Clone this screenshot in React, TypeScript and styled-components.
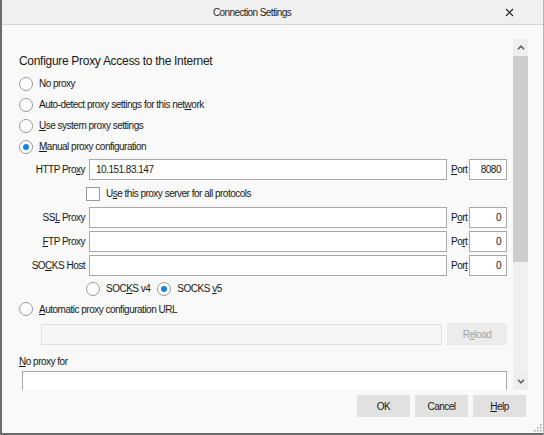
import React from "react";
import styled, { createGlobalStyle } from "styled-components";

const FONT = `"Liberation Sans", Arial, sans-serif`;

const Global = createGlobalStyle`
  html, body { margin: 0; padding: 0; background: #f9f9f9; }
  * { box-sizing: border-box; }
`;

const Window = styled.div`
  position: relative;
  width: 544px;
  height: 435px;
  display: flex;
  flex-direction: column;
  background: #f9f9f9;
  border-left: 2px solid #6c6c6c;
  border-bottom: 2px solid #6c6c6c;
  border-right: 1px solid #b5b5b5;
  overflow: hidden;
  font-family: ${FONT};
  font-size: 10px;
  letter-spacing: -0.5px;
  color: #181818;
`;

const TitleBar = styled.div`
  height: 25px;
  flex: none;
  display: flex;
  align-items: center;
  background: #f0f0f0;
  border-bottom: 1px solid #d6d6d6;
  padding-right: 27px;
`;

const Title = styled.div`
  flex: 1;
  text-align: center;
  font-size: 10px;
  letter-spacing: -0.6px;
  color: #1e1e1e;
`;

const CloseBtn = styled.div`
  width: 14px;
  height: 14px;
  display: flex;
  align-items: center;
  justify-content: center;
`;

const ScrollArea = styled.div`
  margin-top: 14px;
  height: 351px;
  flex: none;
  display: flex;
  padding-right: 15px;
`;

const Content = styled.div`
  flex: 1;
  overflow: hidden;
  padding: 11px 0 0 17px;
  display: flex;
  flex-direction: column;
  & > * {
    flex-shrink: 0;
  }
`;

const Heading = styled.div`
  height: 23px;
  line-height: 23px;
  font-size: 12px;
  letter-spacing: -0.3px;
  color: #181818;
`;

const RadioRow = styled.label<{ $h?: number }>`
  height: ${(p) => p.$h ?? 21}px;
  display: flex;
  align-items: center;
  gap: 6px;
  white-space: nowrap;
`;

const RadioCircle = styled.span<{ $checked?: boolean }>`
  width: 14px;
  height: 14px;
  flex: none;
  border-radius: 50%;
  border: 1px solid #9a9a9a;
  background: #fff;
  display: flex;
  align-items: center;
  justify-content: center;
  &::after {
    content: "";
    display: ${(p) => (p.$checked ? "block" : "none")};
    width: 6px;
    height: 6px;
    border-radius: 50%;
    background: #1683d8;
  }
`;

const Box = styled.span`
  width: 14px;
  height: 14px;
  flex: none;
  border: 1px solid #9a9a9a;
  background: #fff;
`;

const U = styled.span`
  text-decoration: underline;
  text-underline-offset: 1px;
`;

const ProxyGrid = styled.div`
  margin: 2px 0 0 20px;
  display: grid;
  grid-template-columns: 47px 358px 16px 38px;
  grid-auto-rows: 21px;
  column-gap: 3px;
  row-gap: 3px;
  align-items: center;
`;

const FieldLabel = styled.span`
  justify-self: end;
  white-space: nowrap;
  padding-right: 1px;
`;

const PortLabel = styled.span`
  white-space: nowrap;
  padding-left: 1px;
`;

const Field = styled.div<{ $align?: "left" | "right" }>`
  height: 21px;
  background: #fff;
  border: 1px solid #a9a9a9;
  display: flex;
  align-items: center;
  justify-content: ${(p) => (p.$align === "right" ? "flex-end" : "flex-start")};
  padding: 0 5px 0 6px;
  color: #181818;
`;

const CheckRow = styled.div`
  grid-column: 1 / -1;
  display: flex;
  align-items: center;
  gap: 6px;
  padding-left: 47px;
`;

const SocksRow = styled.div`
  margin-top: 2px;
  height: 21px;
  display: flex;
  align-items: center;
  padding-left: 67px;
  gap: 7px;
`;

const UrlRow = styled.div`
  margin-top: 4px;
  height: 22px;
  display: flex;
  align-items: flex-end;
  gap: 5px;
  padding-left: 22px;
`;

const UrlField = styled.div`
  width: 401px;
  height: 21px;
  border: 1px solid #dedede;
  background: #f7f7f7;
`;

const DisabledButton = styled.div`
  width: 60px;
  height: 22px;
  background: #ececec;
  color: #a3a3a3;
  display: flex;
  align-items: center;
  justify-content: center;
`;

const NoProxyLabel = styled.div`
  margin-top: 10px;
  height: 13px;
  line-height: 13px;
`;

const TextArea = styled.div`
  margin: 3px 0 0 3px;
  width: 485px;
  height: 60px;
  background: #fff;
  border: 1px solid #a9a9a9;
`;

const Scrollbar = styled.div`
  width: 15px;
  flex: none;
  display: flex;
  flex-direction: column;
  background: #f0f0f0;
`;

const ScrollBtn = styled.div`
  height: 17px;
  flex: none;
  display: flex;
  align-items: center;
  justify-content: center;
  background: #eeeeee;
`;

const Thumb = styled.div`
  height: 206px;
  flex: none;
  background: #cdcdcd;
`;

const Track = styled.div`
  flex: 1;
`;

const Footer = styled.div`
  flex: 1;
  display: flex;
  justify-content: flex-end;
  align-items: flex-start;
  gap: 5px;
  padding: 5px 17px 0 0;
`;

const Button = styled.div`
  width: 53px;
  height: 22px;
  background: #e1e1e1;
  display: flex;
  align-items: center;
  justify-content: center;
  color: #181818;
`;

const Grip = styled.svg`
  position: absolute;
  right: 1px;
  bottom: 1px;
`;

const Chevron = ({ up }: { up?: boolean }) => (
  <svg width="8" height="5" viewBox="0 0 8 5">
    <path
      d={up ? "M1 4.2 L4 1.2 L7 4.2" : "M1 0.8 L4 3.8 L7 0.8"}
      fill="none"
      stroke="#606060"
      strokeWidth="1.6"
    />
  </svg>
);

const Radio = ({
  checked,
  children,
  h,
}: {
  checked?: boolean;
  children: React.ReactNode;
  h?: number;
}) => (
  <RadioRow $h={h}>
    <RadioCircle $checked={checked} />
    <span>{children}</span>
  </RadioRow>
);

export default function App() {
  return (
    <>
      <Global />
      <Window>
        <TitleBar>
          <Title>Connection Settings</Title>
          <CloseBtn>
            <svg width="9" height="9" viewBox="0 0 9 9">
              <path d="M1 1 L8 8 M8 1 L1 8" stroke="#222" strokeWidth="1.2" />
            </svg>
          </CloseBtn>
        </TitleBar>
        <ScrollArea>
          <Content>
            <Heading>Configure Proxy Access to the Internet</Heading>
            <Radio>No proxy</Radio>
            <Radio>
              Auto-detect proxy settings for this net<U>w</U>ork
            </Radio>
            <Radio>
              <U>U</U>se system proxy settings
            </Radio>
            <Radio checked>
              <U>M</U>anual proxy configuration
            </Radio>
            <ProxyGrid>
              <FieldLabel>
                HTTP Pro<U>x</U>y
              </FieldLabel>
              <Field>10.151.83.147</Field>
              <PortLabel>
                <U>P</U>ort
              </PortLabel>
              <Field $align="right">8080</Field>

              <CheckRow>
                <Box />
                <span>
                  U<U>s</U>e this proxy server for all protocols
                </span>
              </CheckRow>

              <FieldLabel>
                SS<U>L</U> Proxy
              </FieldLabel>
              <Field />
              <PortLabel>
                P<U>o</U>rt
              </PortLabel>
              <Field $align="right">0</Field>

              <FieldLabel>
                <U>F</U>TP Proxy
              </FieldLabel>
              <Field />
              <PortLabel>
                Po<U>r</U>t
              </PortLabel>
              <Field $align="right">0</Field>

              <FieldLabel>
                SO<U>C</U>KS Host
              </FieldLabel>
              <Field />
              <PortLabel>
                Por<U>t</U>
              </PortLabel>
              <Field $align="right">0</Field>
            </ProxyGrid>
            <SocksRow>
              <Radio>
                SOC<U>K</U>S v4
              </Radio>
              <Radio checked>
                SOCKS <U>v</U>5
              </Radio>
            </SocksRow>
            <Radio h={20}>
              <U>A</U>utomatic proxy configuration URL
            </Radio>
            <UrlRow>
              <UrlField />
              <DisabledButton>
                R<U>e</U>load
              </DisabledButton>
            </UrlRow>
            <NoProxyLabel>
              <U>N</U>o proxy for
            </NoProxyLabel>
            <TextArea />
          </Content>
          <Scrollbar>
            <ScrollBtn>
              <Chevron up />
            </ScrollBtn>
            <Thumb />
            <Track />
            <ScrollBtn>
              <Chevron />
            </ScrollBtn>
          </Scrollbar>
        </ScrollArea>
        <Footer>
          <Button>OK</Button>
          <Button>Cancel</Button>
          <Button>
            <U>H</U>elp
          </Button>
        </Footer>
        <Grip width="10" height="10" viewBox="0 0 10 10">
          <g fill="#a0a0a0">
            <rect x="8" y="2" width="1.5" height="1.5" />
            <rect x="5" y="5" width="1.5" height="1.5" />
            <rect x="8" y="5" width="1.5" height="1.5" />
            <rect x="2" y="8" width="1.5" height="1.5" />
            <rect x="5" y="8" width="1.5" height="1.5" />
            <rect x="8" y="8" width="1.5" height="1.5" />
          </g>
        </Grip>
      </Window>
    </>
  );
}
